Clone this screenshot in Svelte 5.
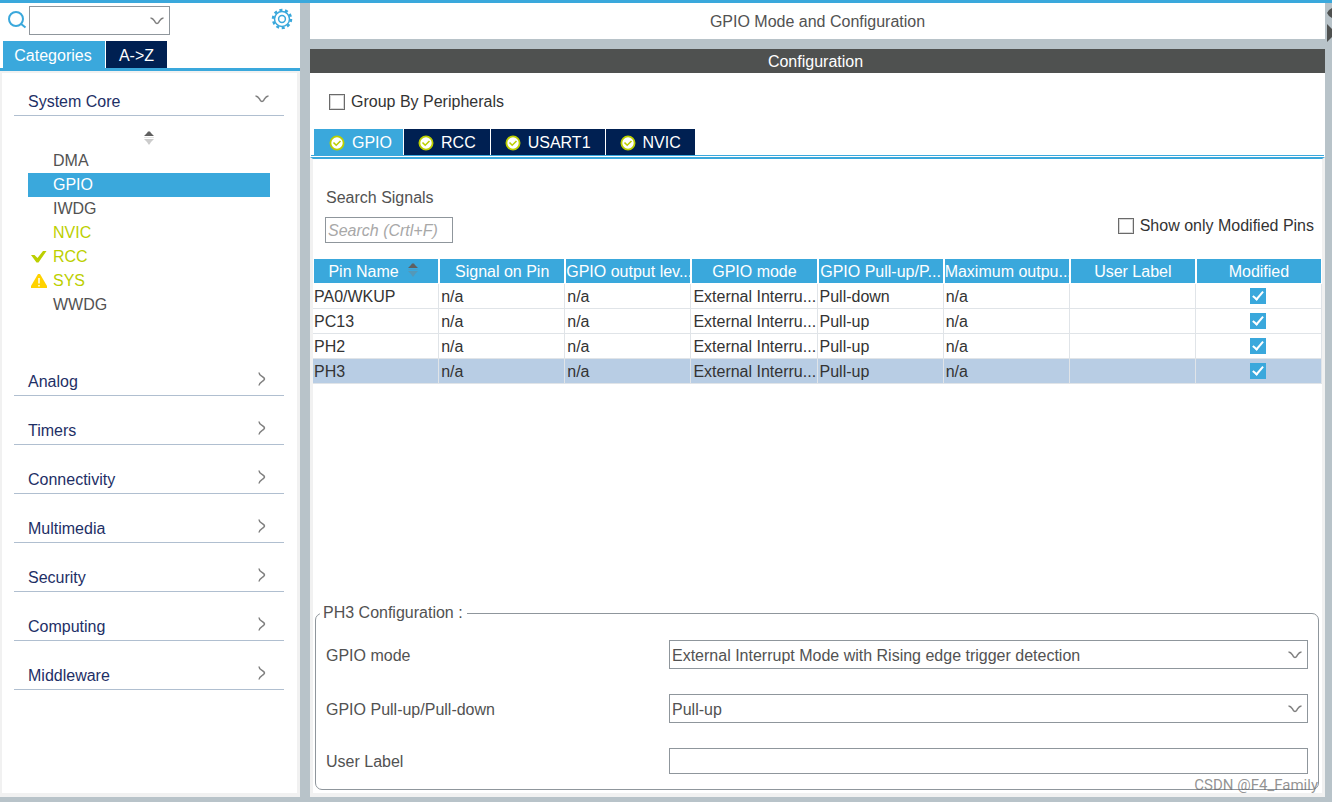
<script lang="ts">
  type Status = 'ok' | 'warning' | '';

  const coreItems: { name: string; used: boolean; status: Status }[] = [
    { name: 'DMA', used: false, status: '' },
    { name: 'GPIO', used: false, status: '' },
    { name: 'IWDG', used: false, status: '' },
    { name: 'NVIC', used: true, status: '' },
    { name: 'RCC', used: true, status: 'ok' },
    { name: 'SYS', used: true, status: 'warning' },
    { name: 'WWDG', used: false, status: '' },
  ];

  const categories = [
    'Analog',
    'Timers',
    'Connectivity',
    'Multimedia',
    'Security',
    'Computing',
    'Middleware',
  ];

  const tabs = ['GPIO', 'RCC', 'USART1', 'NVIC'];

  const columns = [
    'Pin Name',
    'Signal on Pin',
    'GPIO output lev...',
    'GPIO mode',
    'GPIO Pull-up/P...',
    'Maximum outpu...',
    'User Label',
    'Modified',
  ];

  let pins = $state([
    { name: 'PA0/WKUP', pull: 'Pull-down', modified: true },
    { name: 'PC13', pull: 'Pull-up', modified: true },
    { name: 'PH2', pull: 'Pull-up', modified: true },
    { name: 'PH3', pull: 'Pull-up', modified: true },
  ]);

  let selectedItem = $state('GPIO');
  let activeTab = $state('GPIO');
  let selectedPin = $state('PH3');
  let groupBy = $state(false);
  let onlyModified = $state(false);
</script>

{#snippet chevron(dir: string)}
  <svg class="chevron {dir}" viewBox="0 0 14 8" width="14" height="8" aria-hidden="true">
    <path d="M0.500 1 C3 1 3.800 3 5 4.800 Q7 8.200 9 4.800 C10.200 3 11 1 13.500 1" />
  </svg>
{/snippet}

{#snippet sortIcon()}
  <svg class="sort" viewBox="0 0 10 14" width="10" height="14" aria-hidden="true">
    <path class="up" d="M0 5 L3 2 L4 0.500 H6 L7 2 L10 5 Z" />
    <path class="down" d="M0 8 H10 L7 11 L5.500 13.500 H4.500 L3 11 Z" />
    <path class="mid" d="M0 6.500 H10" />
  </svg>
{/snippet}

<div class="app">
  <aside class="sidebar">
    <div class="search-row">
      <svg class="search-icon" viewBox="0 0 20 20" width="20" height="20" aria-hidden="true">
        <circle cx="9" cy="9" r="7" />
        <path d="M13.500 13.500 L18.500 17.500" />
      </svg>
      <div class="select-wrap finder">
        <select aria-label="Find peripheral"><option></option></select>
        {@render chevron('down')}
      </div>
      <button class="gear" aria-label="Settings">
        <svg viewBox="0 0 22 22" width="22" height="22">
          <circle class="teeth" cx="11" cy="11" r="9" />
          <circle cx="11" cy="11" r="7.500" />
          <circle cx="11" cy="11" r="3.400" />
        </svg>
      </button>
    </div>

    <div class="side-tabs">
      <button class="side-tab active">Categories</button>
      <button class="side-tab">A-&gt;Z</button>
    </div>

    <nav class="side-panel">
      <button class="category first">System Core {@render chevron('down')}</button>
      <div class="core">
        <div class="core-sort">{@render sortIcon()}</div>
        {#each coreItems as item (item.name)}
          <button
            class="core-item"
            class:used={item.used}
            class:selected={selectedItem === item.name}
            onclick={() => (selectedItem = item.name)}
          >
            <span class="status">
              {#if item.status === 'ok'}
                <svg viewBox="0 0 16 14" width="16" height="14">
                  <path d="M0 5 L3.500 5 L6.500 8 L12 1 L15.500 1 L7.500 12.500 L5.500 12.500 Z" fill="#bccf00" />
                </svg>
              {:else if item.status === 'warning'}
                <svg viewBox="0 0 16 14" width="16" height="14">
                  <path d="M7 0 H9 L16 12 V14 H0 V12 Z" fill="#ffd200" />
                  <path d="M8 4 V9.500 M8 11 V12.500" stroke="#fff" stroke-width="1.500" />
                </svg>
              {/if}
            </span>
            {item.name}
          </button>
        {/each}
      </div>
      {#each categories as category}
        <button class="category">{category} {@render chevron('right')}</button>
      {/each}
    </nav>
  </aside>

  <main class="main">
    <h1 class="title">GPIO Mode and Configuration</h1>
    <section class="config">
      <h2 class="config-title">Configuration</h2>
      <label class="check group-by">
        <input type="checkbox" bind:checked={groupBy} /> Group By Peripherals
      </label>

      <div class="tabs">
        {#each tabs as tab}
          <button class="tab" class:active={activeTab === tab} onclick={() => (activeTab = tab)}>
            <svg viewBox="0 0 16 16" width="16" height="16" aria-hidden="true">
              <circle cx="8" cy="8" r="6.600" fill="#fff" stroke="#bccf00" stroke-width="1.800" />
              <path d="M4.500 7.500 L7.200 10.200 L11.500 6" fill="none" stroke="#bccf00" stroke-width="1.600" />
            </svg>
            {tab}
          </button>
        {/each}
      </div>

      <div class="panel">
        <div class="filters">
          <div class="signals">
            <label for="signals">Search Signals</label>
            <input id="signals" type="text" placeholder="Search (Crtl+F)" />
          </div>
          <label class="check">
            <input type="checkbox" bind:checked={onlyModified} /> Show only Modified Pins
          </label>
        </div>

        <table class="pins">
          <thead>
            <tr>
              {#each columns as column, i}
                <th>{column}{#if i === 0}{@render sortIcon()}{/if}</th>
              {/each}
            </tr>
          </thead>
          <tbody>
            {#each pins as pin (pin.name)}
              <tr class:selected={selectedPin === pin.name} onclick={() => (selectedPin = pin.name)}>
                <td>{pin.name}</td>
                <td>n/a</td>
                <td>n/a</td>
                <td>External Interru...</td>
                <td>{pin.pull}</td>
                <td>n/a</td>
                <td></td>
                <td class="modified">
                  <input type="checkbox" bind:checked={pin.modified} aria-label="{pin.name} modified" />
                </td>
              </tr>
            {/each}
          </tbody>
        </table>

        <fieldset class="pin-config">
          <legend>{selectedPin} Configuration :</legend>
          <label for="mode">GPIO mode</label>
          <div class="select-wrap">
            <select id="mode">
              <option>External Interrupt Mode with Rising edge trigger detection</option>
            </select>
            {@render chevron('down')}
          </div>
          <label for="pull">GPIO Pull-up/Pull-down</label>
          <div class="select-wrap">
            <select id="pull">
              <option>Pull-up</option>
              <option>Pull-down</option>
            </select>
            {@render chevron('down')}
          </div>
          <label for="user-label">User Label</label>
          <input id="user-label" type="text" />
        </fieldset>
      </div>
    </section>
  </main>

  <div class="splitter">
    <svg viewBox="0 0 7 36" width="7" height="36" aria-hidden="true">
      <path d="M2 6 L4 3 L7 1 V11 L4 9 Z" />
      <path d="M2 17 L7 22 V30 L2 35 Z" />
    </svg>
  </div>
  <span class="watermark">CSDN @F4_Family</span>
</div>

<style>
  :global(body) {
    margin: 0;
  }

  .app {
    position: relative;
    display: flex;
    box-sizing: border-box;
    min-height: 100vh;
    border-top: 3px solid #3aa8dc;
    border-bottom: 5px solid #b8c3c9;
    background: #b8c3c9;
    color: #525252;
    font: 16px/22px 'Liberation Sans', Arial, sans-serif;
  }

  button,
  input,
  select {
    box-sizing: border-box;
    margin: 0;
    padding: 0;
    border: 0;
    border-radius: 0;
    background: none;
    color: inherit;
    font: inherit;
  }

  svg {
    flex: none;
  }

  .sidebar {
    display: flex;
    flex-direction: column;
    flex: 0 0 300px;
    background: #fff;
  }

  .search-row {
    display: flex;
    align-items: center;
    height: 34px;
    padding: 0 7px;
  }

  .search-icon {
    margin-right: 2px;
    fill: none;
    stroke: #3aa8dc;
    stroke-width: 2;
  }

  .gear {
    display: flex;
    margin-left: auto;
    padding-bottom: 2px;
  }

  .gear svg {
    fill: none;
    stroke: #3aa8dc;
    stroke-width: 1.5;
  }

  .gear .teeth {
    stroke-width: 2.5;
    stroke-dasharray: 3 2.65;
  }

  .select-wrap {
    position: relative;
    display: flex;
  }

  .select-wrap select {
    appearance: none;
    width: 100%;
    height: 29px;
    padding: 2px 28px 0 2px;
    border: 1px solid #8f969c;
    background: #fff;
  }

  .select-wrap .chevron {
    position: absolute;
    top: 11px;
    right: 6px;
    pointer-events: none;
  }

  .finder {
    width: 141px;
  }

  .chevron {
    fill: none;
    stroke: #808080;
    stroke-width: 1.5;
  }

  .chevron.right {
    transform: rotate(-90deg);
  }

  .side-tabs {
    display: flex;
    gap: 1px;
    padding: 4px 3px 0;
    border-bottom: 3px solid #3aa8dc;
  }

  .side-tab {
    width: 61px;
    height: 27px;
    padding-top: 2px;
    background: #002052;
    color: #fff;
  }

  .side-tab.active {
    width: 102px;
    padding-right: 2px;
    background: #3aa8dc;
  }

  .side-panel {
    flex: 1;
    padding: 0 13px 0 12px;
    border: solid #f1f1f1;
    border-width: 2px 3px 4px 2px;
  }

  .category {
    display: flex;
    justify-content: space-between;
    align-items: center;
    width: 100%;
    height: 49px;
    padding: 24px 15px 2px 14px;
    border-bottom: 1px solid #b0bfd0;
    color: #1e2f66;
  }

  .category .chevron {
    margin-bottom: 6px;
  }

  .category.first {
    height: 43px;
    padding-top: 18px;
  }

  .core {
    padding: 15px 14px 30px;
  }

  .core-sort {
    display: flex;
    justify-content: center;
    height: 18px;
  }

  .sort .up {
    fill: #606060;
  }

  .sort .down {
    fill: #808080;
    opacity: 0.4;
  }

  .sort .mid {
    stroke: #808080;
    opacity: 0.2;
  }

  .core-item {
    display: flex;
    align-items: center;
    width: 100%;
    height: 24px;
  }

  .core-item.used {
    color: #bccf00;
  }

  .core-item.selected {
    background: #3aa8dc;
    color: #fff;
  }

  .status {
    display: flex;
    width: 22px;
    padding-left: 3px;
  }

  .main {
    display: flex;
    flex-direction: column;
    flex: 1;
    min-width: 0;
    margin-left: 10px;
  }

  .title,
  .config-title {
    margin: 0;
    font-size: 16px;
    font-weight: 400;
    text-align: center;
  }

  .title {
    padding: 8px 0 6px;
    margin-bottom: 10px;
    background: #fff;
  }

  .config {
    display: flex;
    flex-direction: column;
    flex: 1;
    background: #fff;
  }

  .config-title {
    padding: 2px 4px 0 0;
    background: #4f5150;
    color: #fff;
  }

  .check {
    display: flex;
    align-items: center;
    gap: 6px;
    color: #333;
  }

  .group-by {
    padding: 18px 19px 16px;
  }

  input[type='checkbox'] {
    appearance: none;
    display: inline-grid;
    place-content: center;
    width: 16px;
    height: 16px;
    border: 2px solid #6a6a6a;
    background: #fff;
  }

  .check input[type='checkbox'] {
    border-width: 1px;
    outline: 1px solid #d8d8d8;
    outline-offset: -2px;
  }

  input[type='checkbox']:checked {
    border: 0;
    background: #3aa8dc;
  }

  input[type='checkbox']:checked::after {
    content: '';
    width: 4px;
    height: 9px;
    margin-bottom: 3px;
    border: solid #fff;
    border-width: 0 2px 2px 0;
    transform: rotate(40deg);
  }

  .tabs {
    display: flex;
    gap: 1px;
    margin: 0 1px;
    padding: 0 3px;
    border-bottom: 1px solid #3aa8dc;
  }

  .tab {
    display: flex;
    align-items: center;
    gap: 7px;
    height: 26px;
    padding: 1px 14px 0;
    background: #002052;
    color: #fff;
  }

  .tab.active {
    padding: 1px 11px 0 15px;
    background: #3aa8dc;
  }

  .panel {
    display: flex;
    flex-direction: column;
    flex: 1;
    margin-top: 1px;
    border: solid #f1f1f1;
    border-width: 2px 3px 4px;
    border-top-color: #3aa8dc;
  }

  .filters {
    display: flex;
    justify-content: space-between;
    align-items: flex-end;
    padding: 28px 8px 16px 12px;
  }

  .filters .check {
    padding-bottom: 6px;
  }

  .signals {
    display: flex;
    flex-direction: column;
    gap: 8px;
  }

  .signals label {
    padding-left: 1px;
  }

  input[type='text'] {
    height: 26px;
    padding: 1px 2px 0;
    border: 1px solid #8f969c;
    background: #fff;
  }

  .signals input {
    width: 128px;
  }

  .signals input::placeholder {
    color: #a8a8a8;
    font-style: italic;
    opacity: 1;
  }

  .pins {
    width: 100%;
    border-spacing: 0;
    table-layout: fixed;
    color: #333;
  }

  .pins th {
    height: 22px;
    padding: 2px 0 0;
    border: solid #fff;
    border-width: 0 1px 1px;
    background: #3aa8dc;
    background-clip: padding-box;
    color: #fff;
    font-weight: 400;
    white-space: nowrap;
  }

  .pins th .sort {
    margin: 0 6px 0 9px;
  }

  .pins td {
    height: 22px;
    padding: 2px 1px 0 2px;
    border: solid #e0e4e8;
    border-width: 0 1px 1px 0;
    white-space: nowrap;
    overflow: hidden;
  }

  .pins td:first-child {
    padding-left: 1px;
  }

  .pins td.modified {
    padding: 0;
  }

  .pins .selected td {
    background: #b8cde4;
  }

  .modified input[type='checkbox'] {
    display: grid;
    margin: 0 auto;
  }

  .pin-config {
    display: grid;
    grid-template-columns: 343px 1fr;
    row-gap: 25px;
    align-items: center;
    margin: auto 3px 3px 2px;
    padding: 16px 10px 15px;
    border: 1px solid #8f969c;
    border-radius: 7px;
  }

  .pin-config label {
    padding-top: 2px;
  }

  .pin-config legend {
    margin-left: -6px;
    padding: 0 4px 0 3px;
  }

  .splitter {
    flex: 0 0 7px;
    padding-top: 4px;
  }

  .splitter path {
    fill: #4f5150;
  }

  .watermark {
    position: absolute;
    right: 14px;
    bottom: 2px;
    color: rgba(100, 100, 100, 0.7);
    font: 15px/20px Roboto, sans-serif;
  }
</style>
